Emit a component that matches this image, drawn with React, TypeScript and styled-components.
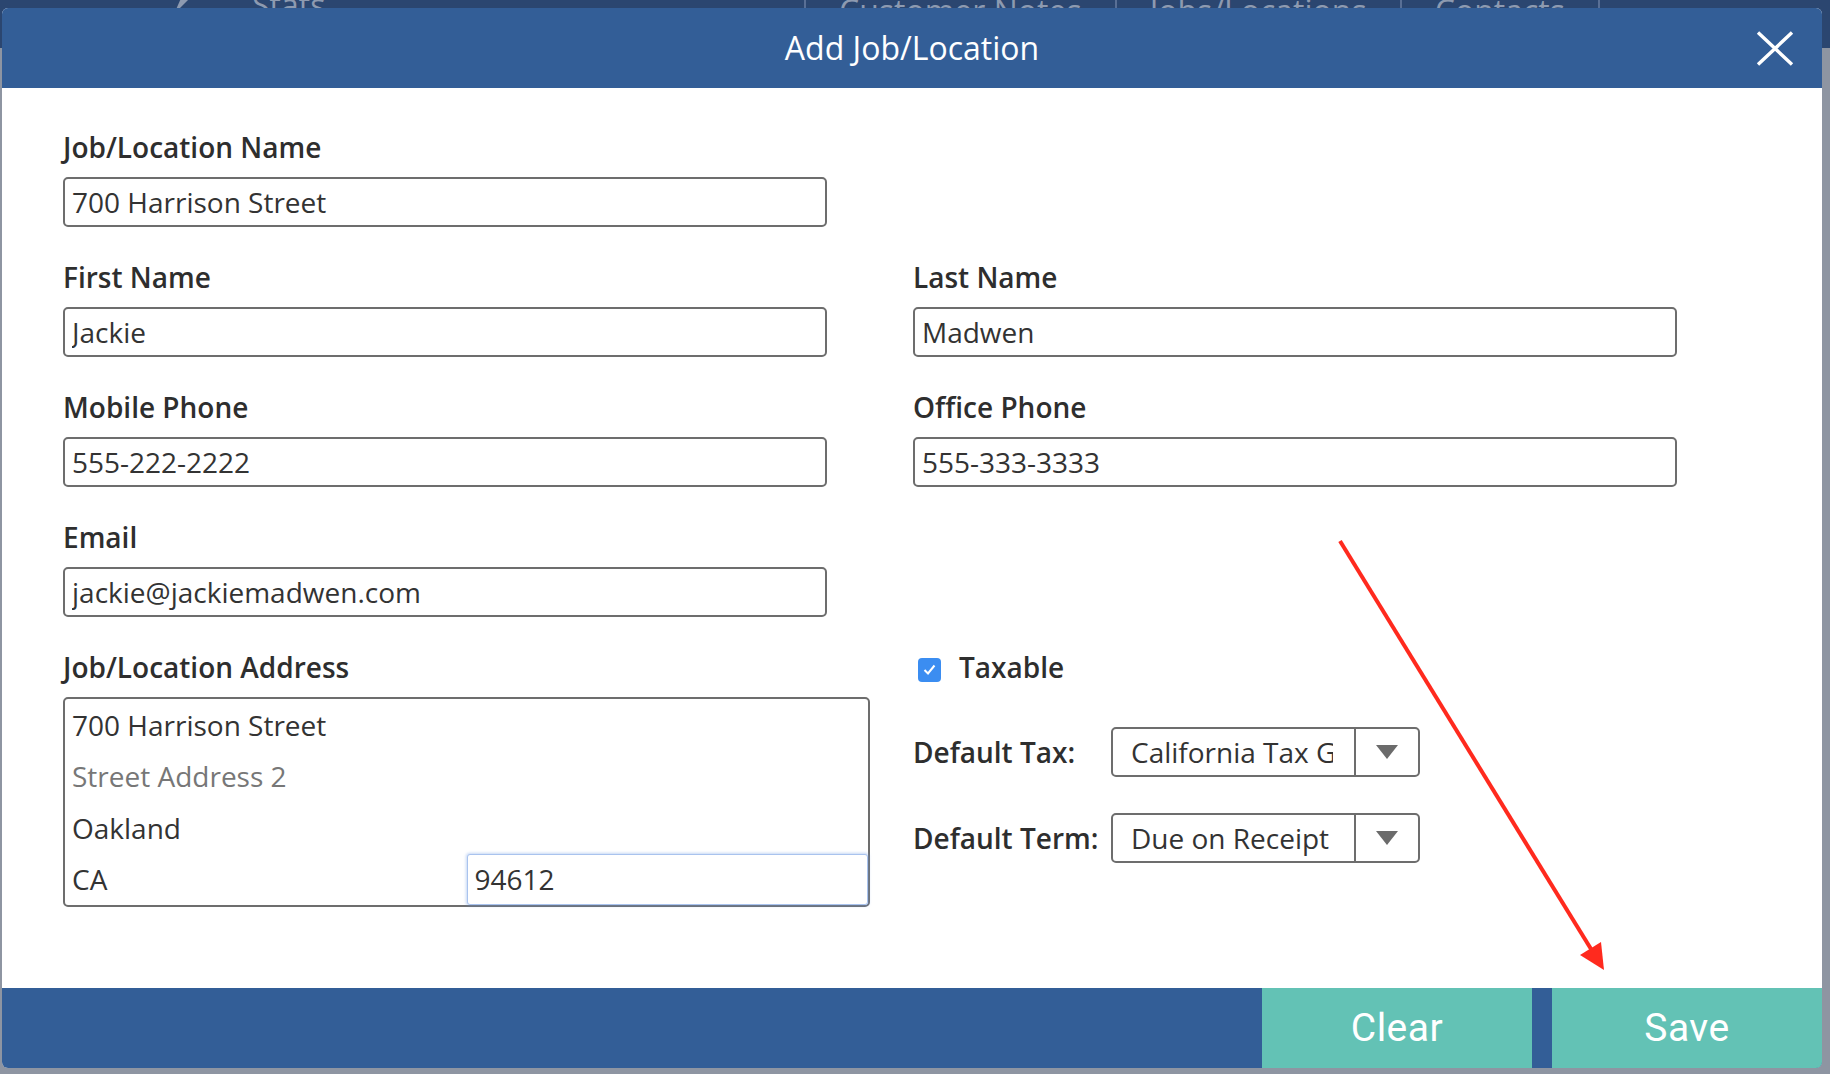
import React from 'react';
import styled, { createGlobalStyle } from 'styled-components';

const GlobalStyle = createGlobalStyle`
  html, body {
    margin: 0;
    padding: 0;
  }
  body {
    font-family: 'Open Sans', 'Liberation Sans', sans-serif;
    background: #8e95a2;
    overflow: hidden;
  }
  * {
    box-sizing: border-box;
  }
`;

const tabs = ['Customer Notes', 'Jobs/Locations', 'Contacts'];

const App: React.FC = () => {
  return (
    <Page>
      <GlobalStyle />
      <PageHeader>
        <StatsTab>
          <svg width="22" height="22" viewBox="0 0 22 22">
            <path d="M4 20 L12 2 L18 6 Z" fill="#8d9ab0" />
          </svg>
          <TabText>Stats</TabText>
        </StatsTab>
        {tabs.map((t) => (
          <Tab key={t}>
            <TabText>{t}</TabText>
          </Tab>
        ))}
        <Tab />
      </PageHeader>

      <Modal>
        <ModalHeader>
          <Title>Add Job/Location</Title>
          <CloseButton aria-label="Close">
            <svg width="38" height="35" viewBox="0 0 38 35">
              <path
                d="M2 1.5 L36 33.5 M36 1.5 L2 33.5"
                stroke="#fff"
                strokeWidth="3.4"
                fill="none"
              />
            </svg>
          </CloseButton>
        </ModalHeader>

        <Body>
          <Row>
            <Field>
              <Label>Job/Location Name</Label>
              <TextInput defaultValue="700 Harrison Street" />
            </Field>
          </Row>
          <Row>
            <Field>
              <Label>First Name</Label>
              <TextInput defaultValue="Jackie" />
            </Field>
            <Field>
              <Label>Last Name</Label>
              <TextInput defaultValue="Madwen" />
            </Field>
          </Row>
          <Row>
            <Field>
              <Label>Mobile Phone</Label>
              <TextInput defaultValue="555-222-2222" />
            </Field>
            <Field>
              <Label>Office Phone</Label>
              <TextInput defaultValue="555-333-3333" />
            </Field>
          </Row>
          <Row>
            <Field>
              <Label>Email</Label>
              <TextInput defaultValue="jackie@jackiemadwen.com" />
            </Field>
          </Row>
          <Row $gap={43}>
            <Field $width={807}>
              <Label>Job/Location Address</Label>
              <AddressBox>
                <AddressLine defaultValue="700 Harrison Street" />
                <AddressLine placeholder="Street Address 2" />
                <AddressLine defaultValue="Oakland" />
                <AddressSplit>
                  <AddressLine defaultValue="CA" />
                  <ZipInput defaultValue="94612" />
                </AddressSplit>
              </AddressBox>
            </Field>
            <TaxPanel>
              <CheckRow>
                <CheckBox>
                  <svg width="13" height="11" viewBox="0 0 13 11">
                    <path
                      d="M1.5 6 L5 9.5 L11.5 1.5"
                      stroke="#fff"
                      strokeWidth="2"
                      fill="none"
                    />
                  </svg>
                </CheckBox>
                <Label>Taxable</Label>
              </CheckRow>
              <Settings>
                <SettingRow>
                  <Label>Default Tax:</Label>
                  <Select>
                    <SelectValue>
                      <ValueText>California Tax Group</ValueText>
                    </SelectValue>
                    <SelectArrow>
                      <Triangle />
                    </SelectArrow>
                  </Select>
                </SettingRow>
                <SettingRow>
                  <Label>Default Term:</Label>
                  <Select>
                    <SelectValue>
                      <ValueText>Due on Receipt</ValueText>
                    </SelectValue>
                    <SelectArrow>
                      <Triangle />
                    </SelectArrow>
                  </Select>
                </SettingRow>
              </Settings>
            </TaxPanel>
          </Row>
        </Body>

        <Footer>
          <FooterButton>Clear</FooterButton>
          <FooterButton>Save</FooterButton>
        </Footer>
      </Modal>

      {/* red annotation arrow on top of the screenshot */}
      <Annotation width="1830" height="1074" viewBox="0 0 1830 1074">
        <line x1="1340" y1="541" x2="1591" y2="949" stroke="#ff2a1e" strokeWidth="4" />
        <polygon points="1604,970 1580,955 1601,942" fill="#ff2a1e" />
      </Annotation>
    </Page>
  );
};

export default App;

const Page = styled.div`
  position: relative;
  width: 1830px;
  height: 1074px;
  background: #8e95a2;
  overflow: hidden;
`;

const PageHeader = styled.div`
  height: 48px;
  background: #2b4670;
  display: flex;
  align-items: stretch;
  padding-left: 170px;
  overflow: hidden;
`;

const StatsTab = styled.div`
  width: 634px;
  display: flex;
  align-items: flex-start;
  gap: 60px;
  margin-top: -6px;
`;

const Tab = styled.div`
  border-left: 2px solid #596f95;
  padding: 0 33px;
  display: flex;
  align-items: flex-start;
`;

const TabText = styled.span`
  font-size: 32px;
  line-height: 30px;
  color: #8d9ab0;
  margin-top: -4px;
  white-space: nowrap;
`;

const Modal = styled.div`
  position: absolute;
  left: 2px;
  top: 8px;
  width: 1820px;
  height: 1060px;
  background: #fff;
  border-radius: 6px;
  overflow: hidden;
  display: flex;
  flex-direction: column;
`;

const ModalHeader = styled.header`
  height: 80px;
  flex: none;
  background: #335e97;
  display: grid;
  grid-template-columns: 1fr auto 1fr;
  align-items: center;
`;

const Title = styled.h1`
  grid-column: 2;
  margin: 0;
  font-size: 32px;
  font-weight: 400;
  line-height: 38px;
  color: #fff;
`;

const CloseButton = styled.button`
  justify-self: end;
  margin-right: 28px;
  padding: 0;
  border: none;
  background: none;
  display: flex;
  cursor: pointer;
`;

const Body = styled.div`
  flex: 1;
  padding: 41px 0 0 61px;
  display: flex;
  flex-direction: column;
  gap: 32px;
`;

const Row = styled.div<{ $gap?: number }>`
  display: flex;
  align-items: flex-start;
  gap: ${(p) => p.$gap ?? 86}px;
`;

const Field = styled.div<{ $width?: number }>`
  width: ${(p) => p.$width ?? 764}px;
  display: flex;
  flex-direction: column;
  gap: 12px;
`;

const Label = styled.label`
  font-size: 28px;
  font-weight: 600;
  line-height: 36px;
  color: #2e2e2e;
  white-space: nowrap;
`;

const TextInput = styled.input`
  width: 100%;
  height: 50px;
  border: 2px solid #6d6d6d;
  border-radius: 5px;
  padding: 0 7px;
  font: 400 28px 'Open Sans', 'Liberation Sans', sans-serif;
  color: #333;
  background: #fff;
  outline: none;
`;

const AddressBox = styled.div`
  height: 210px;
  border: 2px solid #6d6d6d;
  border-radius: 5px;
  display: grid;
  grid-template-rows: repeat(4, 1fr);
`;

const AddressLine = styled.input`
  width: 100%;
  height: 100%;
  border: none;
  padding: 0 7px;
  font: 400 28px 'Open Sans', 'Liberation Sans', sans-serif;
  color: #333;
  background: transparent;
  outline: none;
  &::placeholder {
    color: #777;
  }
`;

const AddressSplit = styled.div`
  display: grid;
  grid-template-columns: 1fr 1fr;
`;

const ZipInput = styled(AddressLine)`
  border: 1px solid #a9c3ee;
  border-radius: 3px;
  background: #fff;
  box-shadow: 0 0 3px 1px rgba(110, 155, 230, 0.4);
`;

const TaxPanel = styled.div`
  width: 507px;
  display: flex;
  flex-direction: column;
`;

const CheckRow = styled.div`
  height: 36px;
  display: flex;
  align-items: center;
  gap: 18px;
  padding-left: 5px;
`;

const CheckBox = styled.span`
  width: 23px;
  height: 24px;
  margin-top: 5px;
  border-radius: 4px;
  background: #3b8df1;
  display: flex;
  align-items: center;
  justify-content: center;
`;

const Settings = styled.div`
  margin-top: 42px;
  display: flex;
  flex-direction: column;
  gap: 36px;
`;

const SettingRow = styled.div`
  display: grid;
  grid-template-columns: 198px 309px;
  align-items: center;
`;

const Select = styled.div`
  height: 50px;
  border: 2px solid #6d6d6d;
  border-radius: 5px;
  display: flex;
`;

const SelectValue = styled.div`
  width: 243px;
  padding: 0 21px 0 18px;
  border-right: 2px solid #6d6d6d;
  display: flex;
  align-items: center;
`;

const ValueText = styled.span`
  display: block;
  overflow: hidden;
  white-space: nowrap;
  font-size: 28px;
  line-height: 46px;
  color: #333;
`;

const SelectArrow = styled.div`
  flex: 1;
  display: flex;
  align-items: center;
  justify-content: center;
`;

const Triangle = styled.span`
  width: 0;
  height: 0;
  border-left: 11.5px solid transparent;
  border-right: 11.5px solid transparent;
  border-top: 14px solid #6b6b6b;
`;

const Footer = styled.footer`
  height: 80px;
  flex: none;
  background: #335e97;
  display: flex;
  justify-content: flex-end;
  gap: 20px;
`;

const FooterButton = styled.button`
  width: 270px;
  height: 100%;
  border: none;
  padding: 0;
  background: #63c2b5;
  color: #fff;
  font: 400 39px Roboto, 'Liberation Sans', sans-serif;
  letter-spacing: 0.5px;
  cursor: pointer;
`;

const Annotation = styled.svg`
  position: absolute;
  left: 0;
  top: 0;
  pointer-events: none;
`;
